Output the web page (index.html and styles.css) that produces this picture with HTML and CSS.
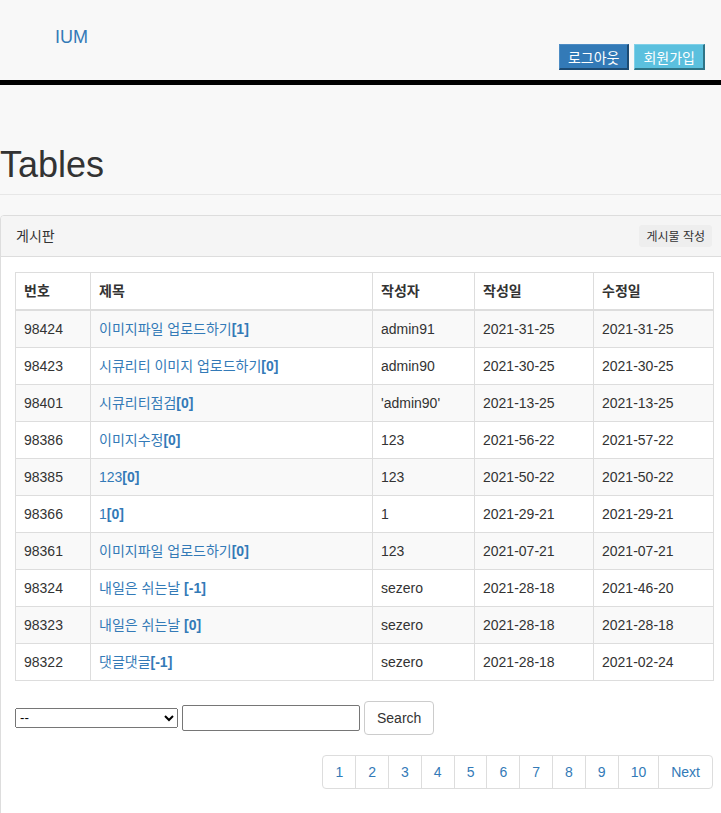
FILE: index.html
```html
<!DOCTYPE html>
<html lang="ko">
<head>
<meta charset="utf-8">
<title>IUM - Tables</title>
<link rel="stylesheet" href="styles.css">
</head>
<body>
<nav class="topnav">
  <a class="brand" href="#">IUM</a>
  <div class="nav-buttons">
    <button class="nbtn nbtn-primary" type="button">로그아웃</button>
    <button class="nbtn nbtn-info" type="button">회원가입</button>
  </div>
</nav>
<div class="page-wrapper">
  <h1 class="page-header">Tables</h1>
  <div class="panel">
    <div class="panel-heading">
      <span>게시판</span>
      <button class="write-btn" type="button">게시물 작성</button>
    </div>
    <div class="panel-body">
      <table class="board">
        <colgroup>
          <col class="c-no"><col class="c-title"><col class="c-writer"><col class="c-date"><col class="c-date2">
        </colgroup>
        <thead>
          <tr><th>번호</th><th>제목</th><th>작성자</th><th>작성일</th><th>수정일</th></tr>
        </thead>
        <tbody>
          <tr><td>98424</td><td><a href="#">이미지파일 업로드하기<b>[1]</b></a></td><td>admin91</td><td>2021-31-25</td><td>2021-31-25</td></tr>
          <tr><td>98423</td><td><a href="#">시큐리티 이미지 업로드하기<b>[0]</b></a></td><td>admin90</td><td>2021-30-25</td><td>2021-30-25</td></tr>
          <tr><td>98401</td><td><a href="#">시큐리티점검<b>[0]</b></a></td><td>'admin90'</td><td>2021-13-25</td><td>2021-13-25</td></tr>
          <tr><td>98386</td><td><a href="#">이미지수정<b>[0]</b></a></td><td>123</td><td>2021-56-22</td><td>2021-57-22</td></tr>
          <tr><td>98385</td><td><a href="#">123<b>[0]</b></a></td><td>123</td><td>2021-50-22</td><td>2021-50-22</td></tr>
          <tr><td>98366</td><td><a href="#">1<b>[0]</b></a></td><td>1</td><td>2021-29-21</td><td>2021-29-21</td></tr>
          <tr><td>98361</td><td><a href="#">이미지파일 업로드하기<b>[0]</b></a></td><td>123</td><td>2021-07-21</td><td>2021-07-21</td></tr>
          <tr><td>98324</td><td><a href="#">내일은 쉬는날 <b>[-1]</b></a></td><td>sezero</td><td>2021-28-18</td><td>2021-46-20</td></tr>
          <tr><td>98323</td><td><a href="#">내일은 쉬는날 <b>[0]</b></a></td><td>sezero</td><td>2021-28-18</td><td>2021-28-18</td></tr>
          <tr><td>98322</td><td><a href="#">댓글댓글<b>[-1]</b></a></td><td>sezero</td><td>2021-28-18</td><td>2021-02-24</td></tr>
        </tbody>
      </table>
      <form class="search-form">
        <select class="search-type"><option>--</option><option>제목</option><option>내용</option><option>작성자</option></select>
        <input class="search-input" type="text">
        <button class="search-btn" type="button">Search</button>
      </form>
      <ul class="pagination">
        <li><a href="#">1</a></li>
        <li><a href="#">2</a></li>
        <li><a href="#">3</a></li>
        <li><a href="#">4</a></li>
        <li><a href="#">5</a></li>
        <li><a href="#">6</a></li>
        <li><a href="#">7</a></li>
        <li><a href="#">8</a></li>
        <li><a href="#">9</a></li>
        <li><a href="#">10</a></li>
        <li><a href="#">Next</a></li>
      </ul>
    </div>
  </div>
</div>
</body>
</html>
```

FILE: styles.css
```css
html {
  overflow: hidden;
}
body {
  margin: 0;
  background: #f8f8f8;
  color: #333;
  font-family: "Liberation Sans", "Noto Sans CJK KR", sans-serif;
  font-size: 14px;
  line-height: 20px;
}
a {
  color: #337ab7;
  text-decoration: none;
}

.topnav {
  display: flex;
  justify-content: space-between;
  align-items: flex-start;
  height: 80px;
  border-bottom: 5px solid #000;
  background: #f8f8f8;
}
.brand {
  font-size: 18px;
  line-height: 20px;
  padding: 27px 0 0 55px;
}
.nav-buttons {
  display: flex;
  gap: 5px;
  margin: 44px 16px 0 0;
}
.nbtn {
  height: 26px;
  padding: 0 8px;
  font-family: "Noto Sans CJK KR", "Liberation Sans", sans-serif;
  font-size: 14px;
  line-height: 20px;
  color: #fff;
  border-style: solid;
  border-width: 1px 2px 2px 1px;
}
.nbtn-primary {
  background: #337ab7;
  border-color: #4d8cc4 #1c4a72 #1c4a72 #4d8cc4;
}
.nbtn-info {
  background: #5bc0de;
  border-color: #7fd0e8 #2f7487 #2f7487 #7fd0e8;
}

.page-header {
  margin: 60px 0 20px;
  padding-bottom: 9px;
  border-bottom: 1px solid #e7e7e7;
  font-size: 36px;
  font-weight: 500;
  line-height: 1.1;
  color: #333;
}

.panel {
  margin-right: -8px;
  background: #fff;
  border: 1px solid #ddd;
  border-radius: 4px;
}
.panel-heading {
  display: flex;
  justify-content: space-between;
  align-items: center;
  height: 41px;
  box-sizing: border-box;
  padding: 0 16px 0 15px;
  background: #f5f5f5;
  border-bottom: 1px solid #ddd;
  border-radius: 3px 3px 0 0;
  color: #333;
}
.write-btn {
  height: 22px;
  padding: 0 6px;
  font-family: "Noto Sans CJK KR", "Liberation Sans", sans-serif;
  font-size: 12px;
  line-height: 18px;
  color: #333;
  background: #eee;
  border: 1px solid #eee;
  border-radius: 3px;
}
.panel-body {
  padding: 15px 15px 15px 14px;
}

.board {
  width: 100%;
  table-layout: fixed;
  border-collapse: collapse;
  border: 1px solid #ddd;
  margin-bottom: 20px;
}
.c-no { width: 75px; }
.c-title { width: 282px; }
.c-writer { width: 102px; }
.c-date { width: 119px; }
.c-date2 { width: 120px; }
.board th,
.board td {
  padding: 8px;
  line-height: 20px;
  border: 1px solid #ddd;
  text-align: left;
  white-space: nowrap;
}
.board th {
  font-weight: bold;
  border-bottom: 2px solid #ddd;
}
.board tbody tr:nth-child(odd) {
  background: #f9f9f9;
}

.search-form {
  display: flex;
  align-items: center;
  gap: 4px;
  margin: 0;
}
.search-type {
  width: 163px;
  height: 20px;
  font-size: 13.33px;
}
.search-input {
  box-sizing: border-box;
  width: 178px;
  height: 26px;
  border: 1px solid #767676;
  border-radius: 2px;
}
.search-btn {
  padding: 6px 12px;
  font-family: "Liberation Sans", sans-serif;
  font-size: 14px;
  line-height: 20px;
  color: #333;
  background: #fff;
  border: 1px solid #ccc;
  border-radius: 4px;
}

.pagination {
  display: flex;
  justify-content: flex-end;
  list-style: none;
  margin: 20px 0;
  padding: 0;
}
.pagination li a {
  display: block;
  padding: 6px 12px;
  line-height: 20px;
  margin-left: -1px;
  background: #fff;
  border: 1px solid #ddd;
  color: #337ab7;
}
.pagination li:first-child a {
  border-radius: 4px 0 0 4px;
}
.pagination li:last-child a {
  border-radius: 0 4px 4px 0;
}
```
